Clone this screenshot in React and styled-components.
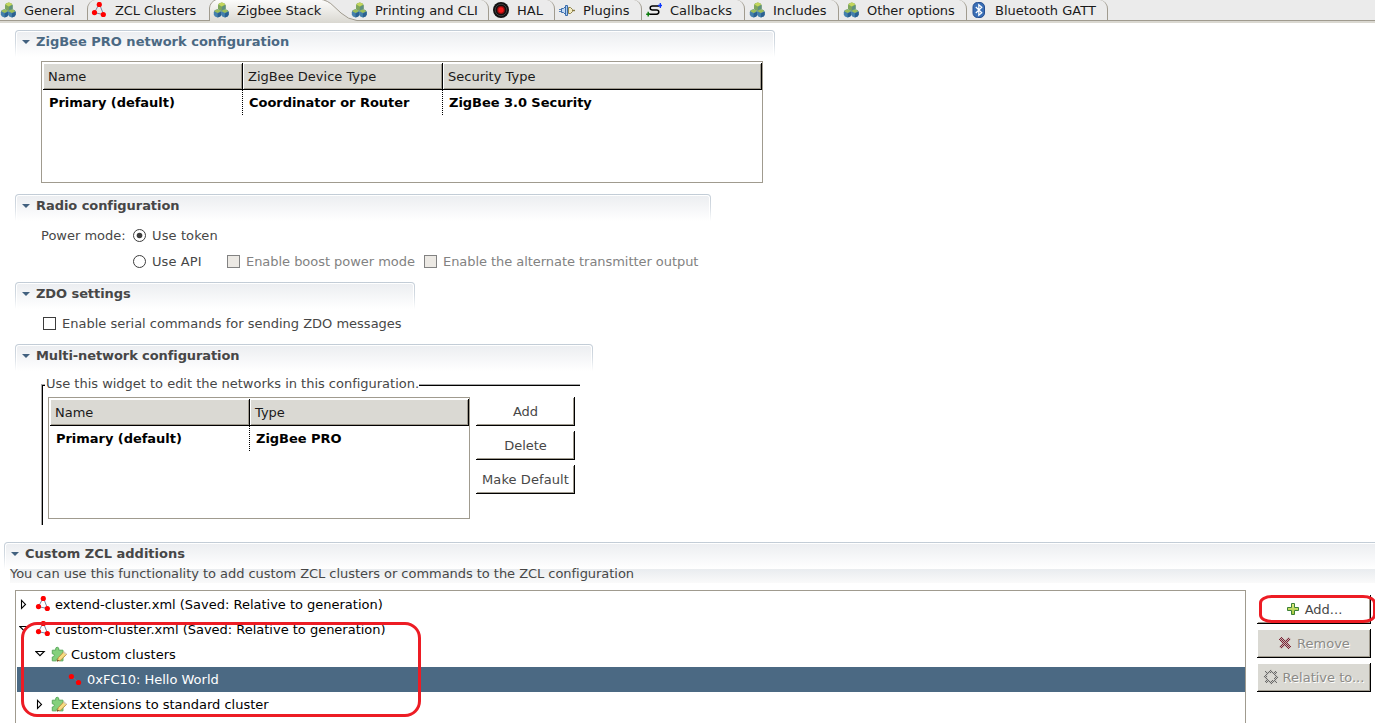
import React from "react";
import styled, { createGlobalStyle, css } from "styled-components";

const GlobalStyle = createGlobalStyle`
  *, *::before, *::after { box-sizing: border-box; }
  html, body { margin: 0; padding: 0; background: #fff; overflow: hidden; }
  body { font: 13px/16px "DejaVu Sans", sans-serif; color: #474747; }
  svg { display: block; flex: none; }
`;

const Window = styled.div`
  position: relative;
  width: 1375px;
  height: 723px;
  overflow: hidden;
  background: #fff;
`;

/* ---------- icons ---------- */

const Ball = ({ x, y, top }) => (
  <g transform={`translate(${x} ${y})`}>
    <path d="M4 0Q7.8 .6 7.8 3V5.6Q7.4 7.6 4 8.4 .6 7.6 .2 5.6V3Q.2 .6 4 0Z" fill={top ? "#7fa65c" : "#4480ad"} />
    <path d="M4 4.2 7.8 2.4V5.6Q7.4 7.6 4 8.4Z" fill={top ? "#5f9080" : "#2b6090"} />
    <path d="M4 0Q6.6 .4 7.4 2L4 3.8 .6 2Q1.4 .4 4 0Z" fill={top ? "#c3d65c" : "#9dbd58"} />
  </g>
);
const CubesIcon = () => (
  <svg width="16" height="16" viewBox="0 0 16 16">
    <Ball x={4.8} y={0.6} top />
    <Ball x={0.6} y={7.2} />
    <Ball x={7.9} y={7.2} />
  </svg>
);
const ClusterIcon = () => (
  <svg width="16" height="16" viewBox="0 0 16 16">
    <path d="M7.6 3 3.5 10.5M8.8 3 12.4 12M3.4 10.8 12.4 12.4" stroke="#7a86a2" fill="none" />
    <circle cx="8.3" cy="2.5" r="2.6" fill="#f00" />
    <circle cx="3.5" cy="10.6" r="2.6" fill="#f00" />
    <circle cx="12.3" cy="12.5" r="2.6" fill="#f00" />
  </svg>
);
const PairIcon = () => (
  <svg width="16" height="16" viewBox="0 0 16 16">
    <path d="M4 5 11 11" stroke="#66718c" />
    <circle cx="4.4" cy="5.5" r="2.6" fill="#f00" />
    <circle cx="11.5" cy="11.5" r="2.6" fill="#f00" />
  </svg>
);
const RecordIcon = () => (
  <svg width="16" height="16" viewBox="0 0 16 16">
    <circle cx="8" cy="8" r="8" fill="#111" />
    <circle cx="8" cy="8" r="5.8" fill="none" stroke="#4a4a4a" strokeWidth=".8" />
    <circle cx="8" cy="8" r="3.9" fill="#8c0d0d" />
    <circle cx="8" cy="8" r="2.7" fill="#f01a1a" />
  </svg>
);
const PlugIcon = () => (
  <svg width="16" height="16" viewBox="0 0 16 16">
    <path d="M0 7.5H3M0 9.5H3" stroke="#4f80ba" />
    <path d="M2.5 6.5H4.5L6.5 4.5V12.5L4.5 10.5H2.5Z" fill="#c3daf5" stroke="#3a6dab" />
    <path d="M6.5 3.5H8.5V13.5H6.5Z" fill="#a9c9ee" stroke="#3a6dab" />
    <path d="M9.5 5.5H11.5L13.5 7.5V9.5L11.5 11.5H9.5Z" fill="#f3ebc0" stroke="#8f834f" />
    <path d="M13.5 8.5H16" stroke="#857842" strokeWidth="1.4" />
  </svg>
);
const CallbackIcon = () => (
  <svg width="16" height="16" viewBox="0 0 16 16">
    <path d="M13.5 4H6.5Q4.2 4 4.2 6T6.5 8H10.5Q12.8 8 12.8 10T10.5 12.2H2" stroke="#000" strokeWidth="1.5" fill="none" />
    <path d="M14.3 1V6M12 3.5H16.5" stroke="#0a35ff" strokeWidth="1.3" />
    <path d="M2.2 9.8V14.6M.2 12.3H4" stroke="#087a08" strokeWidth="1.4" />
  </svg>
);
const BluetoothIcon = () => (
  <svg width="16" height="16" viewBox="0 0 16 16">
    <rect x="2" y=".5" width="11.5" height="15" rx="4.5" fill="#3a6fb6" stroke="#264f91" />
    <path d="M4.8 5 10.8 10.8 7.8 13.3V2.7L10.8 5.2 4.8 11" fill="none" stroke="#fff" strokeWidth="1.2" />
  </svg>
);
const ExtensionIcon = () => (
  <svg width="16" height="16" viewBox="0 0 16 16">
    <g transform="translate(.8 .8) scale(.97)">
      <path d="M.5 3.5H4V2.2Q4 .5 5.6 .5T7.2 2.2V3.5H11.5V7Q13.2 6.5 13.2 8.5T11.5 10V14.5H7.5Q7.8 12.5 6 12.5T4.5 14.5H.5V10.5Q2.6 10.5 2.6 8.8T.5 7.2Z" fill="#84d07c" stroke="#58a85a" />
      <path d="M5.5 14.8 6.7 11.2 12.3 5.2 15.2 7.8 9.2 13.7Z" fill="#f8dc80" stroke="#b9873a" strokeWidth=".9" />
      <path d="M12.3 5.3 15 7.7" stroke="#d8cdbd" strokeWidth="1.5" />
      <path d="M5.2 15.2 6 13 7.4 14.4Z" fill="#5a3c1a" />
    </g>
  </svg>
);
const PlusIcon = () => (
  <svg width="16" height="16" viewBox="0 0 16 16">
    <defs>
      <linearGradient id="plus" x1="0" y1="0" x2="0" y2="1">
        <stop offset="0" stopColor="#e3ee86" />
        <stop offset="1" stopColor="#9fc43a" />
      </linearGradient>
    </defs>
    <path d="M6.5 2.5H9.5V6.5H13.5V9.5H9.5V13.5H6.5V9.5H2.5V6.5H6.5Z" fill="url(#plus)" stroke="#3d8136" />
  </svg>
);
const Dither = ({ id, color }) => (
  <pattern id={id} width="2" height="2" patternUnits="userSpaceOnUse">
    <rect width="1" height="1" fill={color} />
    <rect x="1" y="1" width="1" height="1" fill={color} />
  </pattern>
);
const RemoveIcon = () => (
  <svg width="16" height="16" viewBox="0 0 16 16">
    <defs><Dither id="dx" color="#7d2436" /></defs>
    <path d="M2 4 4.5 2 8 5 11.5 2 14 4 11 8 14 12 11.5 14 8 11 4.5 14 2 12 5 8Z" fill="#c4b2b1" />
    <path d="M2 4 4.5 2 8 5 11.5 2 14 4 11 8 14 12 11.5 14 8 11 4.5 14 2 12 5 8Z" fill="url(#dx)" shapeRendering="crispEdges" />
  </svg>
);
const GearIcon = () => (
  <svg width="16" height="16" viewBox="0 0 16 16">
    <defs>
      <Dither id="dg" color="#6a6a69" />
    </defs>
    <path
      d="M8 0 10 2.6 13.6 2.4 13.4 6 16 8 13.4 10 13.6 13.6 10 13.4 8 16 6 13.4 2.4 13.6 2.6 10 0 8 2.6 6 2.4 2.4 6 2.6ZM8 4.3A3.7 3.7 0 1 0 8 11.7 3.7 3.7 0 1 0 8 4.3Z"
      fill="#c8c7c3"
      fillRule="evenodd"
    />
    <path
      d="M8 0 10 2.6 13.6 2.4 13.4 6 16 8 13.4 10 13.6 13.6 10 13.4 8 16 6 13.4 2.4 13.6 2.6 10 0 8 2.6 6 2.4 2.4 6 2.6ZM8 4.3A3.7 3.7 0 1 0 8 11.7 3.7 3.7 0 1 0 8 4.3Z"
      fill="url(#dg)"
      fillRule="evenodd"
      shapeRendering="crispEdges"
    />
  </svg>
);
const Twistie = styled(({ className }) => (
  <svg className={className} width="8" height="5" viewBox="0 0 8 5"><path d="M0 1H8L4 5Z" fill="#42617f" /></svg>
))`
  margin-bottom: 1px;
`;
const Expander = ({ open }) => (
  <svg width="11" height="11" viewBox="0 0 11 11">
    <path d={open ? "M.8 2.5H9.2L5 6.7Z" : "M2.5 1.4V9.4L6.5 5.4Z"} fill="#fff" stroke="#000" strokeWidth="1.1" />
  </svg>
);

/* ---------- tab bar ---------- */

const TabBar = styled.nav`
  display: flex;
  height: 23px;
  background: linear-gradient(#ebebeb 20px, #a09b8f 20px, #a09b8f 21px, #dad8d1 21px);
`;
const Tab = styled.div`
  position: relative;
  display: flex;
  align-items: flex-start;
  gap: 8px;
  width: ${(p) => p.$w}px;
  height: 21px;
  padding-top: 2px;
  padding-left: ${(p) => (p.$flush ? 0 : 4)}px;
  color: #1a1a1a;
  white-space: nowrap;
  letter-spacing: ${(p) => p.$ls || 0}px;
  ${(p) => p.$edge === "left" && css`
    border-left: 1px solid #a09b8f;
    border-top-left-radius: 8px 9px;
    padding-left: 3px;
  `}
  ${(p) => p.$edge === "right" && css`
    border-right: 1px solid #a09b8f;
    border-top-right-radius: 8px 9px;
  `}
  > * { position: relative; }
`;
const TabLabel = styled.span`
  padding-top: 1px;
`;
const TabCurve = styled.svg`
  && { position: absolute; left: 0; top: 0; }
`;
const SelectedShape = () => (
  <TabCurve width="150" height="23" viewBox="0 0 150 23">
    <defs>
      <linearGradient id="sel" x1="0" y1="0" x2="0" y2="1">
        <stop offset="0" stopColor="#fdfdfc" />
        <stop offset="1" stopColor="#dad8d1" />
      </linearGradient>
    </defs>
    <path d="M.5 23V8Q1 2 8-1H110Q119 0 125 6.5L132 13Q139 19.5 148 20.5V23Z" fill="url(#sel)" />
    <path d="M.5 21V8Q1 2 8-1M110-1Q119 0 125 6.5L132 13Q139 19.5 148 20.5" fill="none" stroke="#a09b8f" />
  </TabCurve>
);

/* ---------- sections ---------- */

const Section = styled.section`
  width: ${(p) => (p.$w ? p.$w + "px" : "auto")};
  height: ${(p) => p.$h}px;
  margin-left: ${(p) => p.$x ?? 15}px;
`;
const Header = styled.header`
  height: 27px;
  padding: 1px ${(p) => (p.$open ? 0 : 1)}px 0 1px;
  border-radius: 4px ${(p) => (p.$open ? 0 : 4)}px 0 0;
  background: linear-gradient(#c2ccd6, #d5dce3 50%, #fff);
`;
const HeaderFill = styled.div`
  display: flex;
  align-items: center;
  gap: 6px;
  height: 26px;
  padding: 0 0 5px 5px;
  border: 1px solid #fff;
  border-width: 1px ${(p) => (p.$open ? 0 : 1)}px 0 1px;
  border-radius: 3px ${(p) => (p.$open ? 0 : 3)}px 0 0;
  background: linear-gradient(#eceef1, #fff);
`;
const Title = styled.h2`
  margin: 0;
  font-size: 13px;
  line-height: 16px;
  letter-spacing: ${(p) => p.$ls || 0}px;
  color: ${(p) => (p.$active ? "#4b6983" : "#474747")};
`;
const SectionHeader = ({ title, active, open, ls }) => (
  <Header $open={open}>
    <HeaderFill $open={open}>
      <Twistie />
      <Title $active={active} $ls={ls}>{title}</Title>
    </HeaderFill>
  </Header>
);

/* ---------- tables ---------- */

const Table = styled.div`
  width: ${(p) => p.$w}px;
  height: 122px;
  margin: ${(p) => p.$m || 0};
  padding: 1px 0 0 1px;
  border: 1px solid #a09b8f;
  background: #fff;
`;
const TableRow = styled.div`
  display: flex;
`;
const HeadCell = styled.div`
  width: ${(p) => p.$w}px;
  height: 27px;
  padding: 6px 0 0 5px;
  color: #1a1a1a;
  background: #dad9d3;
  border: solid #000;
  border-width: 0 1px 1px 0;
  box-shadow: inset 1px 1px #fff, inset -1px -1px #a09b8f;
`;
const Cell = styled.div`
  width: ${(p) => p.$w}px;
  height: 25px;
  padding: 5px 0 0 6px;
  color: #000;
  font-weight: bold;
  letter-spacing: -0.04px;
  white-space: nowrap;
  background: ${(p) => (p.$last ? "none" : "repeating-linear-gradient(#000 0 1px, #fff 1px 2px) right top / 1px 100% no-repeat")};
`;
const DataTable = ({ w, m, columns }) => (
  <Table $w={w} $m={m}>
    <TableRow>{columns.map((c) => <HeadCell key={c.name} $w={c.w}>{c.name}</HeadCell>)}</TableRow>
    <TableRow>
      {columns.map((c, i) => <Cell key={c.name} $w={c.w} $last={i === columns.length - 1}>{c.value}</Cell>)}
    </TableRow>
  </Table>
);

/* ---------- form controls ---------- */

const FieldRow = styled.div`
  display: flex;
  align-items: center;
  height: 26px;
  margin-top: ${(p) => p.$top || 0}px;
  padding-left: ${(p) => p.$x}px;
`;
const FieldLabel = styled.span`
  width: 92px;
`;
const Option = styled.label`
  display: flex;
  align-items: center;
  gap: 6px;
  width: ${(p) => (p.$w ? p.$w + "px" : "auto")};
  color: ${(p) => (p.$off ? "#828282" : "#474747")};
  letter-spacing: ${(p) => p.$ls || 0}px;
  white-space: nowrap;
  > :first-child { margin-bottom: 1px; }
`;
const Box = styled.span`
  width: 13px;
  height: 13px;
  border: 1px solid ${(p) => (p.$off ? "#828282" : "#3c3c3c")};
  background: ${(p) => (p.$off ? "#ece9e4" : "#fff")};
`;
const Radio = ({ on }) => (
  <svg width="13" height="13" viewBox="0 0 13 13">
    <circle cx="6.5" cy="6.5" r="6" fill="#fff" stroke="#3c3c3c" />
    {on && <circle cx="6.5" cy="6.5" r="2.8" fill="#3c3c3c" />}
  </svg>
);
const Button = styled.button`
  display: flex;
  align-items: center;
  justify-content: center;
  gap: 4px;
  width: ${(p) => p.$w}px;
  height: 29px;
  padding: 2px 0 0 ${(p) => p.$shift || 0}px;
  font: inherit;
  letter-spacing: ${(p) => p.$ls || 0}px;
  white-space: nowrap;
  color: ${(p) => (p.disabled ? "#8b8a86" : "#474747")};
  text-shadow: ${(p) => (p.disabled ? "1px 1px #fff" : "none")};
  background: ${(p) => (p.disabled ? "#dad9d3" : "#fff")};
  border: solid #000;
  border-width: 0 1px 1px 0;
  box-shadow: inset 1px 1px #fff, inset -1px -1px #a09b8f;
  > svg { margin-bottom: 2px; }
`;
const ButtonColumn = styled.div`
  display: flex;
  flex-direction: column;
  gap: 5px;
`;

/* ---------- network group ---------- */

const Group = styled.div`
  width: 539px;
  margin: 5px 0 0 26px;
`;
const Legend = styled.div`
  display: flex;
  height: 16px;
  padding-left: 5px;
  letter-spacing: -0.015px;
  white-space: nowrap;
  background: linear-gradient(#000, #000) 1px 9px / 1px 7px no-repeat,
    linear-gradient(#a8a8a8, #a8a8a8) 0 8px / 1px 8px no-repeat,
    linear-gradient(#a8a8a8, #a8a8a8) 0 8px / 4px 1px no-repeat,
    linear-gradient(#000, #000) 1px 9px / 3px 1px no-repeat;
  &::after {
    content: "";
    flex: 1;
    height: 2px;
    margin-top: 8px;
    border-top: 1px solid #a8a8a8;
    border-bottom: 1px solid #000;
  }
`;
const GroupBody = styled.div`
  display: flex;
  gap: 6px;
  height: 133px;
  padding: 5px 0 0 5px;
  border-left: 1px solid #a8a8a8;
  box-shadow: inset 1px 0 #000;
`;

/* ---------- custom additions ---------- */

const Hint = styled.p`
  height: 14px;
  margin: 0 0 0 6px;
  line-height: 10px;
  letter-spacing: -0.042px;
  white-space: nowrap;
  background: linear-gradient(#e9ecef, #fafafa);
`;
const AdditionsBody = styled.div`
  display: flex;
  gap: 11px;
  padding: 7px 0 0 11px;
`;
const Tree = styled.div`
  width: 1231px;
  height: 150px;
  padding: 1px 0 0 1px;
  border: 1px solid #a09b8f;
`;
const TreeRow = styled.div`
  display: flex;
  align-items: center;
  height: 25px;
  padding-left: ${(p) => p.$indent}px;
  letter-spacing: -0.01px;
  white-space: nowrap;
  color: ${(p) => (p.$selected ? "#fff" : "#000")};
  background: ${(p) => (p.$selected ? "#4b6983" : "transparent")};
  > svg:not(:first-child), > svg:nth-last-child(2) { margin-bottom: 1px; }
  > svg + svg { margin-left: 5px; }
  span { margin-left: 4px; }
`;
const SideButtons = styled(ButtonColumn)`
  padding-top: 5px;
`;
const Highlight = styled.div`
  position: absolute;
  left: ${(p) => p.$x}px;
  top: ${(p) => p.$y}px;
  width: ${(p) => p.$w}px;
  height: ${(p) => p.$h}px;
  border: 3px solid #ed1c24;
  border-radius: ${(p) => p.$r};
`;

const tabs = [
  { w: 87, flush: true, ls: -0.1, label: "General", Icon: CubesIcon },
  { w: 122, edge: "left", ls: -0.08, label: "ZCL Clusters", Icon: ClusterIcon },
  { w: 138, selected: true, ls: -0.08, label: "Zigbee Stack", Icon: CubesIcon },
  { w: 142, edge: "right", label: "Printing and CLI", Icon: CubesIcon },
  { w: 66, edge: "right", label: "HAL", Icon: RecordIcon },
  { w: 87, edge: "right", label: "Plugins", Icon: PlugIcon },
  { w: 103, edge: "right", label: "Callbacks", Icon: CallbackIcon },
  { w: 94, edge: "right", ls: -0.08, label: "Includes", Icon: CubesIcon },
  { w: 128, edge: "right", ls: -0.1, label: "Other options", Icon: CubesIcon },
  { w: 141, edge: "right", label: "Bluetooth GATT", Icon: BluetoothIcon },
];

const Spacer = styled.div`
  height: 7px;
`;

export default function App() {
  return (
    <Window>
      <GlobalStyle />
      <TabBar>
        {tabs.map(({ w, flush, edge, selected, ls, label, Icon }) => (
          <Tab key={label} $w={w} $flush={flush} $edge={edge} $ls={ls}>
            {selected && <SelectedShape />}
            <Icon />
            <TabLabel>{label}</TabLabel>
          </Tab>
        ))}
      </TabBar>
      <Spacer />

      <Section $w={760} $h={164}>
        <SectionHeader title="ZigBee PRO network configuration" active />
        <DataTable
          w={722}
          m="4px 0 0 26px"
          columns={[
            { w: 200, name: "Name", value: "Primary (default)" },
            { w: 200, name: "ZigBee Device Type", value: "Coordinator or Router" },
            { w: 319, name: "Security Type", value: "ZigBee 3.0 Security" },
          ]}
        />
      </Section>

      <Section $w={696} $h={88}>
        <SectionHeader title="Radio configuration" ls={-0.06} />
        <FieldRow $x={26} $top={2}>
          <FieldLabel>Power mode:</FieldLabel>
          <Option $ls={0.12}><Radio on />Use token</Option>
        </FieldRow>
        <FieldRow $x={118}>
          <Option $w={94} $ls={0.1}><Radio />Use API</Option>
          <Option $off $w={197} $ls={-0.04}><Box $off />Enable boost power mode</Option>
          <Option $off $ls={-0.05}><Box $off />Enable the alternate transmitter output</Option>
        </FieldRow>
      </Section>

      <Section $w={400} $h={62}>
        <SectionHeader title="ZDO settings" ls={-0.08} />
        <FieldRow $x={28} $top={2}>
          <Option><Box />Enable serial commands for sending ZDO messages</Option>
        </FieldRow>
      </Section>

      <Section $w={578} $h={198}>
        <SectionHeader title="Multi-network configuration" ls={-0.1} />
        <Group>
          <Legend>Use this widget to edit the networks in this configuration.</Legend>
          <GroupBody>
            <DataTable
              w={422}
              m="0 0 0 1px"
              columns={[
                { w: 200, name: "Name", value: "Primary (default)" },
                { w: 219, name: "Type", value: "ZigBee PRO" },
              ]}
            />
            <ButtonColumn>
              <Button $w={99} $shift={1}>Add</Button>
              <Button $w={99} $shift={1}>Delete</Button>
              <Button $w={99} $shift={1} $ls={0.08}>Make Default</Button>
            </ButtonColumn>
          </GroupBody>
        </Group>
      </Section>

      <Section $x={4} $h={181}>
        <SectionHeader title="Custom ZCL additions" open />
        <Hint>You can use this functionality to add custom ZCL clusters or commands to the ZCL configuration</Hint>
        <AdditionsBody>
          <Tree>
            <TreeRow $indent={2}>
              <Expander /><ClusterIcon /><span>extend-cluster.xml (Saved: Relative to generation)</span>
            </TreeRow>
            <TreeRow $indent={2}>
              <Expander open /><ClusterIcon /><span>custom-cluster.xml (Saved: Relative to generation)</span>
            </TreeRow>
            <TreeRow $indent={18}>
              <Expander open /><ExtensionIcon /><span>Custom clusters</span>
            </TreeRow>
            <TreeRow $indent={50} $selected>
              <PairIcon /><span>0xFC10: Hello World</span>
            </TreeRow>
            <TreeRow $indent={18}>
              <Expander /><ExtensionIcon /><span>Extensions to standard cluster</span>
            </TreeRow>
          </Tree>
          <SideButtons>
            <Button $w={114}><PlusIcon />Add...</Button>
            <Button $w={114} disabled><RemoveIcon />Remove</Button>
            <Button $w={114} disabled><GearIcon />Relative to...</Button>
          </SideButtons>
        </AdditionsBody>
      </Section>

      <Highlight $x={21} $y={622} $w={400} $h={95} $r="16px" />
      <Highlight $x={1259} $y={595} $w={117} $h={28} $r="13px / 8px" />
    </Window>
  );
}
